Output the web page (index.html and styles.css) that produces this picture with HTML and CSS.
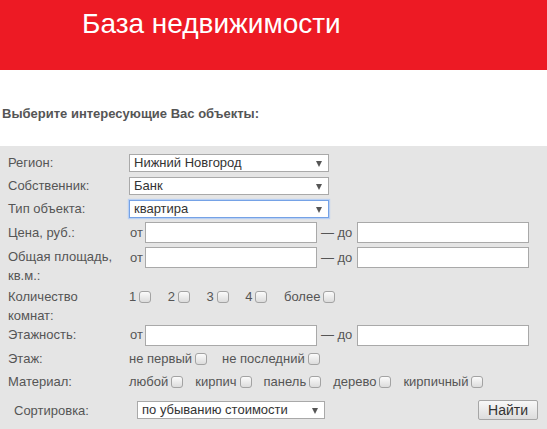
FILE: index.html
```html
<!DOCTYPE html>
<html lang="ru">
<head>
<meta charset="utf-8">
<title>База недвижимости</title>
<link rel="stylesheet" href="styles.css">
</head>
<body>
<header class="top">
  <h1 class="title">База недвижимости</h1>
</header>
<h2 class="lead">Выберите интересующие Вас объекты:</h2>
<form class="panel">
  <div class="row r1">
    <span class="label">Регион:</span>
    <span class="sel"><select class="dd"><option>Нижний Новгород</option></select></span>
  </div>
  <div class="row r1">
    <span class="label">Собственник:</span>
    <span class="sel"><select class="dd"><option>Банк</option></select></span>
  </div>
  <div class="row r1">
    <span class="label">Тип объекта:</span>
    <span class="sel"><select class="dd focus"><option>квартира</option></select></span>
  </div>
  <div class="row r4">
    <span class="label">Цена, руб.:</span>
    <span class="from">от</span><input class="txt" type="text"><span class="to">— до</span><input class="txt" type="text">
  </div>
  <div class="row r5">
    <span class="label two">Общая площадь,<br>кв.м.:</span>
    <div class="ctl">
      <span class="from">от</span><input class="txt" type="text"><span class="to">— до</span><input class="txt" type="text">
    </div>
  </div>
  <div class="row r6">
    <span class="label two">Количество<br>комнат:</span>
    <div class="checks rooms">
      <label class="ck">1<input type="checkbox" class="box"></label>
      <label class="ck">2<input type="checkbox" class="box"></label>
      <label class="ck">3<input type="checkbox" class="box"></label>
      <label class="ck">4<input type="checkbox" class="box"></label>
      <label class="ck">более<input type="checkbox" class="box"></label>
    </div>
  </div>
  <div class="row r7">
    <span class="label">Этажность:</span>
    <span class="from">от</span><input class="txt" type="text"><span class="to">— до</span><input class="txt" type="text">
  </div>
  <div class="row r1">
    <span class="label">Этаж:</span>
    <div class="checks floor">
      <label class="ck">не первый<input type="checkbox" class="box"></label>
      <label class="ck">не последний<input type="checkbox" class="box"></label>
    </div>
  </div>
  <div class="row r1">
    <span class="label">Материал:</span>
    <div class="checks material">
      <label class="ck">любой<input type="checkbox" class="box"></label>
      <label class="ck">кирпич<input type="checkbox" class="box"></label>
      <label class="ck">панель<input type="checkbox" class="box"></label>
      <label class="ck">дерево<input type="checkbox" class="box"></label>
      <label class="ck">кирпичный<input type="checkbox" class="box"></label>
    </div>
  </div>
  <div class="row r10">
    <span class="label sortl">Сортировка:</span>
    <span class="sel"><select class="dd sort"><option>по убыванию стоимости</option></select></span>
    <button type="button" class="btn">Найти</button>
  </div>
</form>
</body>
</html>
```

FILE: styles.css
```css
html, body {
  margin: 0;
  padding: 0;
  background: #ffffff;
  font-family: "Liberation Sans", Arial, sans-serif;
}

.top {
  height: 70px;
  background: #ed1a24;
  box-sizing: border-box;
  padding: 8px 0 0 82px;
}

.title {
  margin: 0;
  font-size: 28px;
  line-height: 32px;
  font-weight: normal;
  color: #ffffff;
}

.lead {
  margin: 36px 0 0 2px;
  height: 40px;
  font-size: 13px;
  line-height: 15px;
  font-weight: bold;
  color: #555555;
}

.panel {
  background: #e5e5e5;
  padding: 5px 0 6px 8px;
  margin: 0;
  font-size: 13px;
  color: #555555;
}

.row {
  display: flex;
  align-items: center;
}

.r1 { height: 23px; }
.r4 { height: 25px; }
.r5 { height: 39px; padding-top: 2px; align-items: flex-start; }
.r6 { height: 37px; padding-top: 1px; align-items: flex-start; }
.r7 { height: 22px; padding-top: 1px; align-items: flex-start; }
.r10 { height: 34px; }

.label {
  width: 121px;
  flex: none;
  line-height: 19px;
}

.two {
  line-height: 19px;
}

.sortl {
  width: 123px;
  padding-left: 6px;
}

.ctl {
  display: flex;
  align-items: center;
}

.sel {
  position: relative;
  display: inline-block;
}

.sel::after {
  content: "";
  position: absolute;
  right: 7px;
  top: 7px;
  border-left: 3.5px solid transparent;
  border-right: 3.5px solid transparent;
  border-top: 6px solid #555555;
}

.dd {
  -webkit-appearance: none;
  appearance: none;
  width: 200px;
  height: 18px;
  box-sizing: border-box;
  border: 1px solid #a9a9a9;
  border-radius: 0;
  background: #ffffff;
  font-family: "Liberation Sans", Arial, sans-serif;
  font-size: 13px;
  color: #333333;
  padding: 0 0 0 4px;
  margin: 0;
  line-height: 16px;
  outline: none;
}

.focus {
  border-color: #75a2e6;
  box-shadow: 0 0 1px 1px #b9d0f3;
}

.sort {
  width: 188px;
}

.from {
  margin: 0 2px 0 1px;
  line-height: 19px;
}

.to {
  margin: 0 5px 0 4px;
  line-height: 19px;
}

.txt {
  width: 172px;
  height: 21px;
  box-sizing: border-box;
  border: 1px solid #a9a9a9;
  background: #ffffff;
  margin: 0;
  padding: 0 3px;
  font-family: "Liberation Sans", Arial, sans-serif;
  font-size: 13px;
}

.checks {
  display: flex;
  align-items: center;
  line-height: 19px;
}

.ck {
  display: inline-flex;
  align-items: center;
  margin: 0;
}

.rooms .ck { margin-right: 16.5px; }
.floor .ck { margin-right: 15px; }
.material .ck { margin-right: 12px; }

.box {
  -webkit-appearance: none;
  appearance: none;
  width: 12px;
  height: 12px;
  box-sizing: border-box;
  margin: 0 0 0 3px;
  border: 1px solid #a3a3a3;
  border-radius: 3px;
  background: linear-gradient(#fbfbfb, #dcdcdc);
}

.btn {
  margin-left: auto;
  margin-right: 9px;
  width: 60px;
  height: 20px;
  box-sizing: border-box;
  border: 1px solid #a6a6a6;
  border-radius: 2px;
  background: linear-gradient(#f8f8f8, #dddddd);
  font-family: "Liberation Sans", Arial, sans-serif;
  font-size: 14px;
  color: #333333;
  padding: 0;
  line-height: 18px;
}
```
